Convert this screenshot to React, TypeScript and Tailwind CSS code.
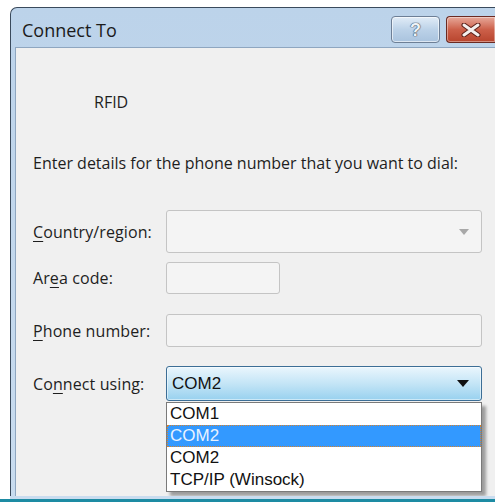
import React from "react";

const font = { fontFamily: '"Segoe UI", "Open Sans", "Liberation Sans", sans-serif' };
const listFont = { fontFamily: '"Liberation Sans", Arial, sans-serif' };

const Underline = ({ children }: { children: string }) => (
  <span className="underline underline-offset-[3px] decoration-1">{children}</span>
);

const Field = ({
  label,
  className = "",
  children,
}: {
  label: React.ReactNode;
  className?: string;
  children: React.ReactNode;
}) => (
  <div className={`flex items-center ${className}`}>
    <div className="w-[133px] shrink-0 text-[16px] text-[#1e1e1e] tracking-[0.1px]">{label}</div>
    {children}
  </div>
);

const TitleButtons = () => (
  <div className="flex items-start gap-[6px] pt-[8px]">
    <div className="w-[49px] h-[27px] rounded-[4px] border border-[#6d7f96] bg-gradient-to-b from-[#e1ecf7] via-[#bcd2e8] to-[#a9c3de] flex items-center justify-center shadow-[inset_0_0_0_1px_rgba(255,255,255,0.6)]">
      <span
        className="text-[18px] font-bold leading-none text-[#eef3f8] [text-shadow:0_0_1px_#3e4d60,0_0_1px_#3e4d60,0_0_1px_#3e4d60]"
        style={listFont}
      >
        ?
      </span>
    </div>
    <div className="w-[49px] h-[27px] rounded-l-[4px] border border-r-0 border-[#6b2a22] bg-gradient-to-b from-[#e6a89a] via-[#cc604a] to-[#b8442d] flex items-center justify-center shadow-[inset_0_0_0_1px_rgba(255,255,255,0.4)]">
      <svg width="20" height="14" viewBox="0 0 20 14">
        <path d="M3 2 L17 12 M17 2 L3 12" stroke="#5a2019" strokeWidth="5" strokeLinecap="round" />
        <path d="M3 2 L17 12 M17 2 L3 12" stroke="#f4f0ee" strokeWidth="3" strokeLinecap="round" />
      </svg>
    </div>
  </div>
);

export default function App() {
  const items = ["COM1", "COM2", "COM2", "TCP/IP (Winsock)"];
  return (
    <div className="relative w-[495px] h-[502px] bg-white pt-[7px] pl-[10px] overflow-hidden" style={font}>
      <div className="h-[495px] rounded-tl-[7px] border-l border-t border-[#3a4a5c] bg-gradient-to-b from-[#bcd3ea] to-[#c9dcef] flex flex-col">
        {/* title bar */}
        <div className="h-[39px] flex justify-between pl-[11px]">
          <div className="pt-[9px] text-[18px] text-[#1b1b1b]">Connect To</div>
          <TitleButtons />
        </div>

        {/* client area */}
        <div className="flex-1 ml-[4px] border-l border-t border-[#8ea6c0] bg-[#f0f0f0] pl-[17px] relative">
          <div className="pt-[42px] pl-[61px] text-[16px] text-[#1e1e1e]">RFID</div>
          <div className="mt-[37px] text-[16px] text-[#1e1e1e]">
            Enter details for the phone number that you want to dial:
          </div>

          <Field className="mt-[35px]" label={<><Underline>C</Underline>ountry/region:</>}>
            <div className="w-[316px] h-[43px] rounded-[3px] border border-[#c4c4c4] bg-[#f4f4f4] flex items-center justify-end pr-[12px]">
              <svg width="10" height="6" viewBox="0 0 10 6">
                <path d="M0 0 H10 L5 6 Z" fill="#a8a8a8" />
              </svg>
            </div>
          </Field>
          <Field className="mt-[9px]" label={<>Ar<Underline>e</Underline>a code:</>}>
            <div className="w-[114px] h-[32px] rounded-[3px] border border-[#c4c4c4] bg-[#f4f4f4]" />
          </Field>
          <Field className="mt-[20px]" label={<><Underline>P</Underline>hone number:</>}>
            <div className="w-[316px] h-[33px] rounded-[3px] border border-[#c4c4c4] bg-[#f4f4f4]" />
          </Field>
          <Field className="mt-[19px]" label={<>Co<Underline>n</Underline>nect using:</>}>
            <div className="w-[316px] h-[35px] rounded-[3px] border border-[#3c6e96] bg-gradient-to-b from-[#eaf6fd] via-[#c4e5f6] to-[#98d1ef] flex items-center justify-between pl-[5px] pr-[12px] shadow-[inset_0_0_0_1px_rgba(255,255,255,0.5)]">
              <span className="text-[17px] text-[#111]" style={listFont}>
                COM2
              </span>
              <svg width="12" height="7" viewBox="0 0 12 7">
                <path d="M0 0 H12 L6 7 Z" fill="#111" />
              </svg>
            </div>
          </Field>

          {/* open drop-down list */}
          <div
            className="absolute left-[150px] top-[354px] w-[316px] border border-[#7a7a7a] bg-white shadow-[4px_4px_3px_rgba(0,0,0,0.35)] text-[17px] leading-[21px] text-[#111]"
            style={listFont}
          >
            {items.map((item, i) => (
              <div
                key={i}
                className={
                  i === 1
                    ? "h-[22px] pl-[3px] bg-[#3399ff] text-[#e8f2ff] outline-1 outline-dotted outline-[#d9822b] -outline-offset-1"
                    : "h-[22px] pl-[3px]"
                }
              >
                {item}
              </div>
            ))}
          </div>
        </div>
      </div>
      <div className="absolute left-[10px] top-[496px] w-[485px] h-[3px] bg-[#c9dcef]" />
      <div className="absolute left-0 top-[499px] w-[495px] h-[3px] bg-[#1d8ba3]" />
    </div>
  );
}
